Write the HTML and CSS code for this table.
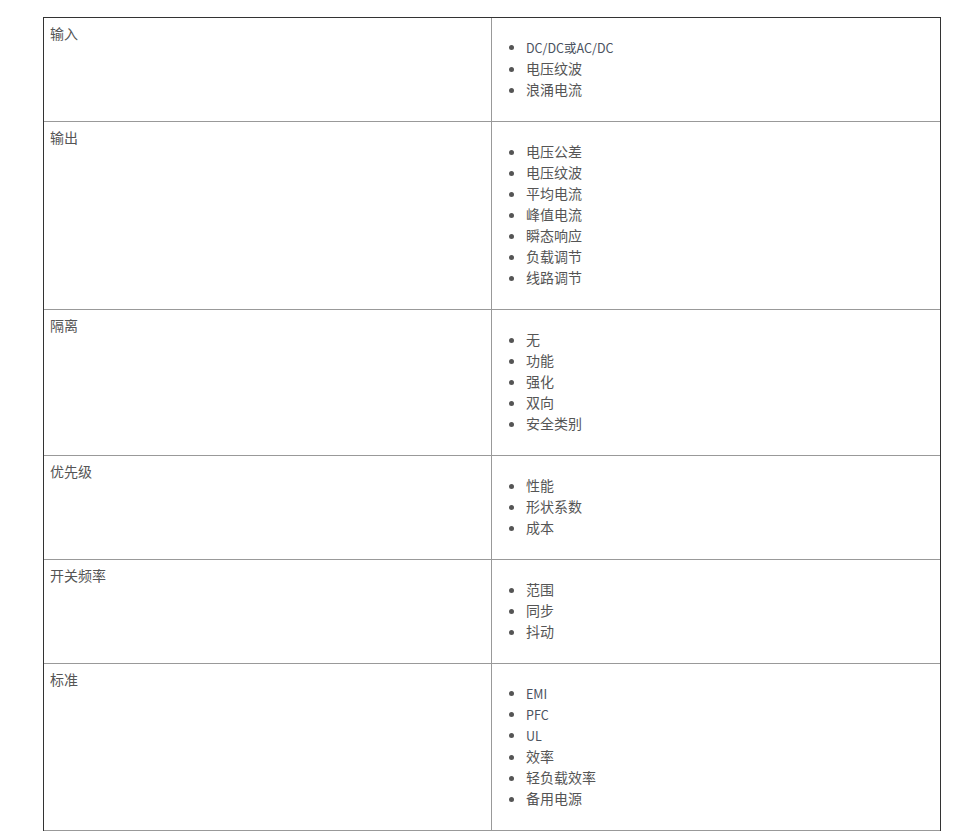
FILE: index.html
```html
<!DOCTYPE html>
<html lang="zh-CN">
<head>
<meta charset="utf-8">
<link rel="stylesheet" href="styles.css">
</head>
<body>
<div class="wrap">
<table class="spec">
<tr><td class="k">输入</td><td class="v"><ul><li class="lat">DC/DC或AC/DC</li><li>电压纹波</li><li>浪涌电流</li></ul></td></tr>
<tr><td class="k">输出</td><td class="v"><ul><li>电压公差</li><li>电压纹波</li><li>平均电流</li><li>峰值电流</li><li>瞬态响应</li><li>负载调节</li><li>线路调节</li></ul></td></tr>
<tr><td class="k">隔离</td><td class="v"><ul><li>无</li><li>功能</li><li>强化</li><li>双向</li><li>安全类别</li></ul></td></tr>
<tr><td class="k">优先级</td><td class="v"><ul><li>性能</li><li>形状系数</li><li>成本</li></ul></td></tr>
<tr><td class="k">开关频率</td><td class="v"><ul><li>范围</li><li>同步</li><li>抖动</li></ul></td></tr>
<tr><td class="k">标准</td><td class="v"><ul><li class="lat">EMI</li><li class="lat">PFC</li><li class="lat">UL</li><li>效率</li><li>轻负载效率</li><li>备用电源</li></ul></td></tr>
</table>
</div>
</body>
</html>
```
FILE: styles.css
```css
html, body { margin: 0; padding: 0; background: #fff; }
body {
  font-family: "Noto Sans CJK SC", "Noto Sans", sans-serif;
  font-size: 14px;
  line-height: 21px;
  color: #555;
}
.wrap {
  margin: 17px 0 0 43px;
  width: 896px;
  border-top: 1px solid #333;
  border-left: 1px solid #333;
  border-right: 1px solid #333;
}
.spec {
  width: 100%;
  border-collapse: collapse;
  table-layout: fixed;
}
.spec td {
  vertical-align: top;
  padding: 5px 6px 7px 5px;
  border-bottom: 1px solid #999;
}
.spec td.k { width: 436px; padding-left: 6px; padding-right: 5px; border-right: 1px solid #999; }
.spec ul {
  margin: 14px 0;
  padding-left: 29px;
}
.spec li { line-height: 21px; }
.spec li::marker { color: #555; }
.spec li.lat { font-size: 12.5px; color: #4a5260; }
```
